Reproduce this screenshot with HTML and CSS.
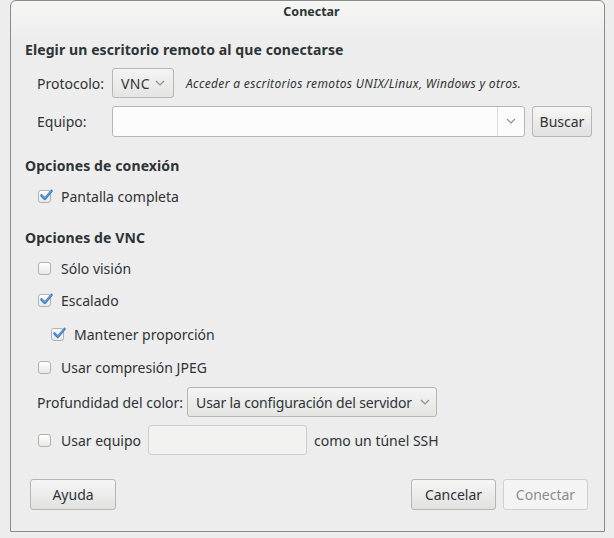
FILE: index.html
```html
<!DOCTYPE html>
<html lang="es">
<head>
<meta charset="utf-8">
<title>Conectar</title>
<link rel="stylesheet" href="styles.css">
</head>
<body>
<div class="window">
  <div class="titlebar">Conectar</div>
  <div class="content">
    <div class="heading h1">Elegir un escritorio remoto al que conectarse</div>

    <div class="row r-proto">
      <span class="label lbl-proto">Protocolo:</span>
      <div class="combo combo-vnc"><span>VNC</span><svg class="chev" width="10" height="6" viewBox="0 0 10 6"><path d="M1 1 L5 5 L9 1" fill="none" stroke="#8b8e8f" stroke-width="1.2"/></svg></div>
      <span class="desc">Acceder a escritorios remotos UNIX/Linux, Windows y otros.</span>
    </div>

    <div class="row r-equipo">
      <span class="label lbl-proto">Equipo:</span>
      <div class="entry-combo">
        <div class="entry-field"></div>
        <div class="entry-btn"><svg class="chev" width="10" height="6" viewBox="0 0 10 6"><path d="M1 1 L5 5 L9 1" fill="none" stroke="#8b8e8f" stroke-width="1.2"/></svg></div>
      </div>
      <div class="btn btn-buscar">Buscar</div>
    </div>

    <div class="heading h2">Opciones de conexión</div>
    <div class="check c1"><span class="box checked"><svg width="15" height="13" viewBox="0 0 15 13"><path d="M2.5 6.5 L5.8 9.8 L12.5 2" fill="none" stroke="#3d7cc9" stroke-width="2.6" stroke-linecap="round" stroke-linejoin="round"/><path d="M3 6.5 L5.8 9.3 L12 2.3" fill="none" stroke="#7eaee6" stroke-width="0.8" stroke-linecap="round"/></svg></span><span>Pantalla completa</span></div>

    <div class="heading h3">Opciones de VNC</div>
    <div class="check c2"><span class="box"></span><span>Sólo visión</span></div>
    <div class="check c3"><span class="box checked"><svg width="15" height="13" viewBox="0 0 15 13"><path d="M2.5 6.5 L5.8 9.8 L12.5 2" fill="none" stroke="#3d7cc9" stroke-width="2.6" stroke-linecap="round" stroke-linejoin="round"/><path d="M3 6.5 L5.8 9.3 L12 2.3" fill="none" stroke="#7eaee6" stroke-width="0.8" stroke-linecap="round"/></svg></span><span>Escalado</span></div>
    <div class="check c4 indent"><span class="box checked"><svg width="15" height="13" viewBox="0 0 15 13"><path d="M2.5 6.5 L5.8 9.8 L12.5 2" fill="none" stroke="#3d7cc9" stroke-width="2.6" stroke-linecap="round" stroke-linejoin="round"/><path d="M3 6.5 L5.8 9.3 L12 2.3" fill="none" stroke="#7eaee6" stroke-width="0.8" stroke-linecap="round"/></svg></span><span>Mantener proporción</span></div>
    <div class="check c5"><span class="box"></span><span>Usar compresión JPEG</span></div>

    <div class="row r-depth">
      <span class="label">Profundidad del color:</span>
      <div class="combo combo-depth"><span class="combo-text">Usar la configuración del servidor</span><svg class="chev" width="10" height="6" viewBox="0 0 10 6"><path d="M1 1 L5 5 L9 1" fill="none" stroke="#8b8e8f" stroke-width="1.2"/></svg></div>
    </div>

    <div class="row r-ssh">
      <div class="check inline"><span class="box"></span><span>Usar equipo</span></div>
      <div class="entry-disabled"></div>
      <span class="label ssh-lbl">como un túnel SSH</span>
    </div>

    <div class="actions">
      <div class="btn btn-help">Ayuda</div>
      <div class="spacer"></div>
      <div class="btn btn-cancel">Cancelar</div>
      <div class="btn btn-connect disabled">Conectar</div>
    </div>
  </div>
</div>
</body>
</html>
```

FILE: styles.css
```css
* { box-sizing: border-box; }
html, body { margin: 0; padding: 0; }
body {
  background: #ededed;
  width: 614px;
  height: 538px;
  overflow: hidden;
  font-family: "Noto Sans", "DejaVu Sans", sans-serif;
  font-size: 14px;
  color: #2e3436;
}
.window {
  margin-left: 10px;
  width: 595px;
  height: 532px;
  border: 1px solid #8a8a8a;
  border-radius: 6px 6px 0 0;
  background: linear-gradient(#f6f6f5 0px, #ededed 40px, #ededed 100%);
}
.titlebar {
  height: 23px;
  line-height: 22px;
  text-align: center;
  font-weight: bold;
  font-size: 12.5px;
  padding-left: 8px;
}
.content {
  padding: 0 12px 0 14px;
}
.heading {
  height: 20px;
  line-height: 20px;
  font-weight: bold;
  font-size: 14px;
  letter-spacing: 0.1px;
}
.h1 { margin-top: 16px; }
.h2 { margin-top: 20px; }
.h3 { margin-top: 22px; }
.row {
  display: flex;
  align-items: center;
  height: 30px;
}
.r-proto { margin-top: 8px; }
.r-equipo { margin-top: 8px; }
.label { white-space: nowrap; }
.lbl-proto { width: 87px; padding-left: 12px; }
.combo {
  display: flex;
  align-items: center;
  height: 30px;
  border: 1px solid #b6b6b3;
  border-radius: 3px;
  background: linear-gradient(#f4f4f4, #e4e4e2);
  padding: 0 7px 0 8px;
  gap: 5px;
  white-space: nowrap;
}
.combo-vnc { width: 62px; letter-spacing: 0.3px; }
.chev { flex: none; }
.desc {
  margin-left: 12px;
  font-style: italic;
  font-size: 12px;
  letter-spacing: 0.35px;
  white-space: nowrap;
}
.entry-combo {
  display: flex;
  width: 413px;
  height: 31px;
  border: 1px solid #b6b6b3;
  border-radius: 3px;
  background: #fcfcfc;
  overflow: hidden;
}
.entry-field { flex: 1; }
.entry-btn {
  width: 27px;
  border-left: 1px solid #dcdcdc;
  display: flex;
  align-items: center;
  justify-content: center;
}
.btn {
  display: flex;
  align-items: center;
  justify-content: center;
  height: 31px;
  border: 1px solid #b6b6b3;
  border-radius: 3px;
  background: linear-gradient(#f6f6f6, #e1e1df);
  white-space: nowrap;
}
.btn-buscar { margin-left: 7px; width: 60px; }
.check {
  display: flex;
  align-items: center;
  height: 20px;
  padding-left: 13px;
  gap: 10px;
}
.check.inline { padding-left: 0; }
.indent { padding-left: 26px; }
.c1 { margin-top: 10px; }
.c2 { margin-top: 10px; }
.c3 { margin-top: 12px; }
.c4 { margin-top: 14px; }
.c5 { margin-top: 13px; }
.box {
  width: 13px;
  height: 13px;
  border: 1px solid #b0b0ad;
  border-radius: 3px;
  background: linear-gradient(#ffffff, #e8e8e6);
  position: relative;
  flex: none;
}
.box svg {
  position: absolute;
  left: 0;
  top: -2px;
}
.r-depth { margin-top: 10px; height: 30px; padding-left: 12px; }
.combo-depth {
  margin-left: 4px;
  width: 250px;
  justify-content: space-between;
  height: 30px;
  padding: 0 6px 0 8px;
  gap: 4px;
}
.combo-text {
  letter-spacing: -0.15px;
  overflow: hidden;
}
.r-ssh { margin-top: 8px; padding-left: 13px; }
.entry-disabled {
  margin-left: 7px;
  width: 159px;
  height: 30px;
  border: 1px solid #cfcfcd;
  border-radius: 3px;
  background: #f2f2f1;
}
.ssh-lbl { margin-left: 7px; }
.actions {
  display: flex;
  margin-top: 24px;
  padding-left: 5px;
  padding-right: 4px;
}
.spacer { flex: 1; }
.btn-help { width: 86px; }
.btn-cancel { width: 85px; }
.btn-connect { width: 85px; margin-left: 7px; }
.btn.disabled {
  color: #8b8e8f;
  background: #f4f4f4;
  border-color: #cfcfcd;
}
```
